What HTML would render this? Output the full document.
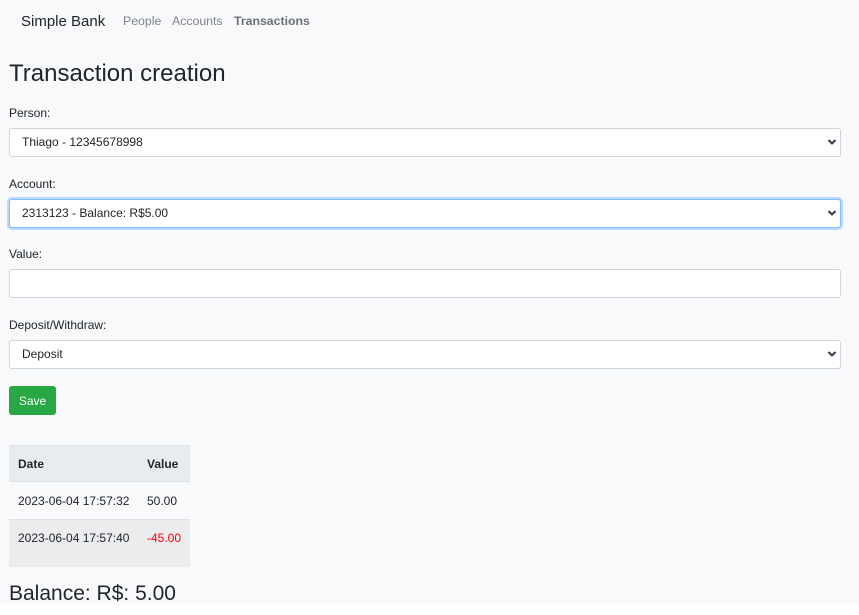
<!DOCTYPE html>
<html><head><style>
body{margin:0;width:859px;height:615px;background:#fff;font-family:"Liberation Sans",sans-serif;color:#212529;position:relative;overflow:hidden}
.bg{position:absolute;left:0;top:0;width:859px;height:605px;background:#f8f9fa}
.a{position:absolute;white-space:nowrap}
.lbl{font-size:12px;left:9px}
.sel{position:absolute;left:9px;width:830px;height:27px;background:#fff;border:1px solid #ced4da;border-radius:3px;font-size:12px;line-height:27px;box-sizing:content-box}
.sel span{position:absolute;left:12px;top:0}
.sel svg{position:absolute;right:3px;top:9px}
.focus{border-color:#80bdff;box-shadow:0 0 0 2px rgba(0,123,255,.25)}
</style></head><body>
<div class="bg"></div>
<div class="a" style="left:21px;top:13px;font-size:15px">Simple Bank</div>
<div class="a" style="left:123px;top:14px;font-size:12.3px;color:#7f8388">People</div>
<div class="a" style="left:172px;top:14px;font-size:12.3px;color:#7f8388">Accounts</div>
<div class="a" style="left:234px;top:14px;font-size:12.3px;color:#6c7075;font-weight:bold">Transactions</div>
<div class="a" style="left:9px;top:60px;font-size:24px">Transaction creation</div>
<div class="a lbl" style="top:106px">Person:</div>
<div class="sel" style="top:128px"><span>Thiago - 12345678998</span><svg width="10" height="8" viewBox="0 0 10 8"><path d="M1.5 2 L5 5.5 L8.5 2" stroke="#343a40" stroke-width="2" fill="none"/></svg></div>
<div class="a lbl" style="top:177px">Account:</div>
<div class="sel focus" style="top:199px"><span>2313123 - Balance: R$5.00</span><svg width="10" height="8" viewBox="0 0 10 8"><path d="M1.5 2 L5 5.5 L8.5 2" stroke="#343a40" stroke-width="2" fill="none"/></svg></div>
<div class="a lbl" style="top:247px">Value:</div>
<div class="sel" style="top:269px"></div>
<div class="a lbl" style="top:318px">Deposit/Withdraw:</div>
<div class="sel" style="top:340px"><span>Deposit</span><svg width="10" height="8" viewBox="0 0 10 8"><path d="M1.5 2 L5 5.5 L8.5 2" stroke="#343a40" stroke-width="2" fill="none"/></svg></div>
<div class="a" style="left:9px;top:386px;width:47px;height:29px;background:#28a745;border-radius:3px;color:#fff;font-size:12px;line-height:30px;text-align:center">Save</div>
<div class="a" style="left:9px;top:445px;width:181px;height:37px;background:#e9ecef;border-top:1px solid #dee2e6;border-bottom:1px solid #dee2e6;box-sizing:border-box"></div>
<div class="a" style="left:18px;top:457px;font-size:12px;font-weight:bold">Date</div>
<div class="a" style="left:147px;top:457px;font-size:12px;font-weight:bold">Value</div>
<div class="a" style="left:18px;top:494px;font-size:12px">2023-06-04 17:57:32</div>
<div class="a" style="left:147px;top:494px;font-size:12px">50.00</div>
<div class="a" style="left:9px;top:519px;width:181px;height:48px;background:#ebecee;border-top:1px solid #dee2e6;box-sizing:border-box"></div>
<div class="a" style="left:18px;top:531px;font-size:12px">2023-06-04 17:57:40</div>
<div class="a" style="left:147px;top:531px;font-size:12px;color:#ff0000">-45.00</div>
<div class="a" style="left:9px;top:582px;font-size:21px">Balance: R$: 5.00</div>
</body></html>
